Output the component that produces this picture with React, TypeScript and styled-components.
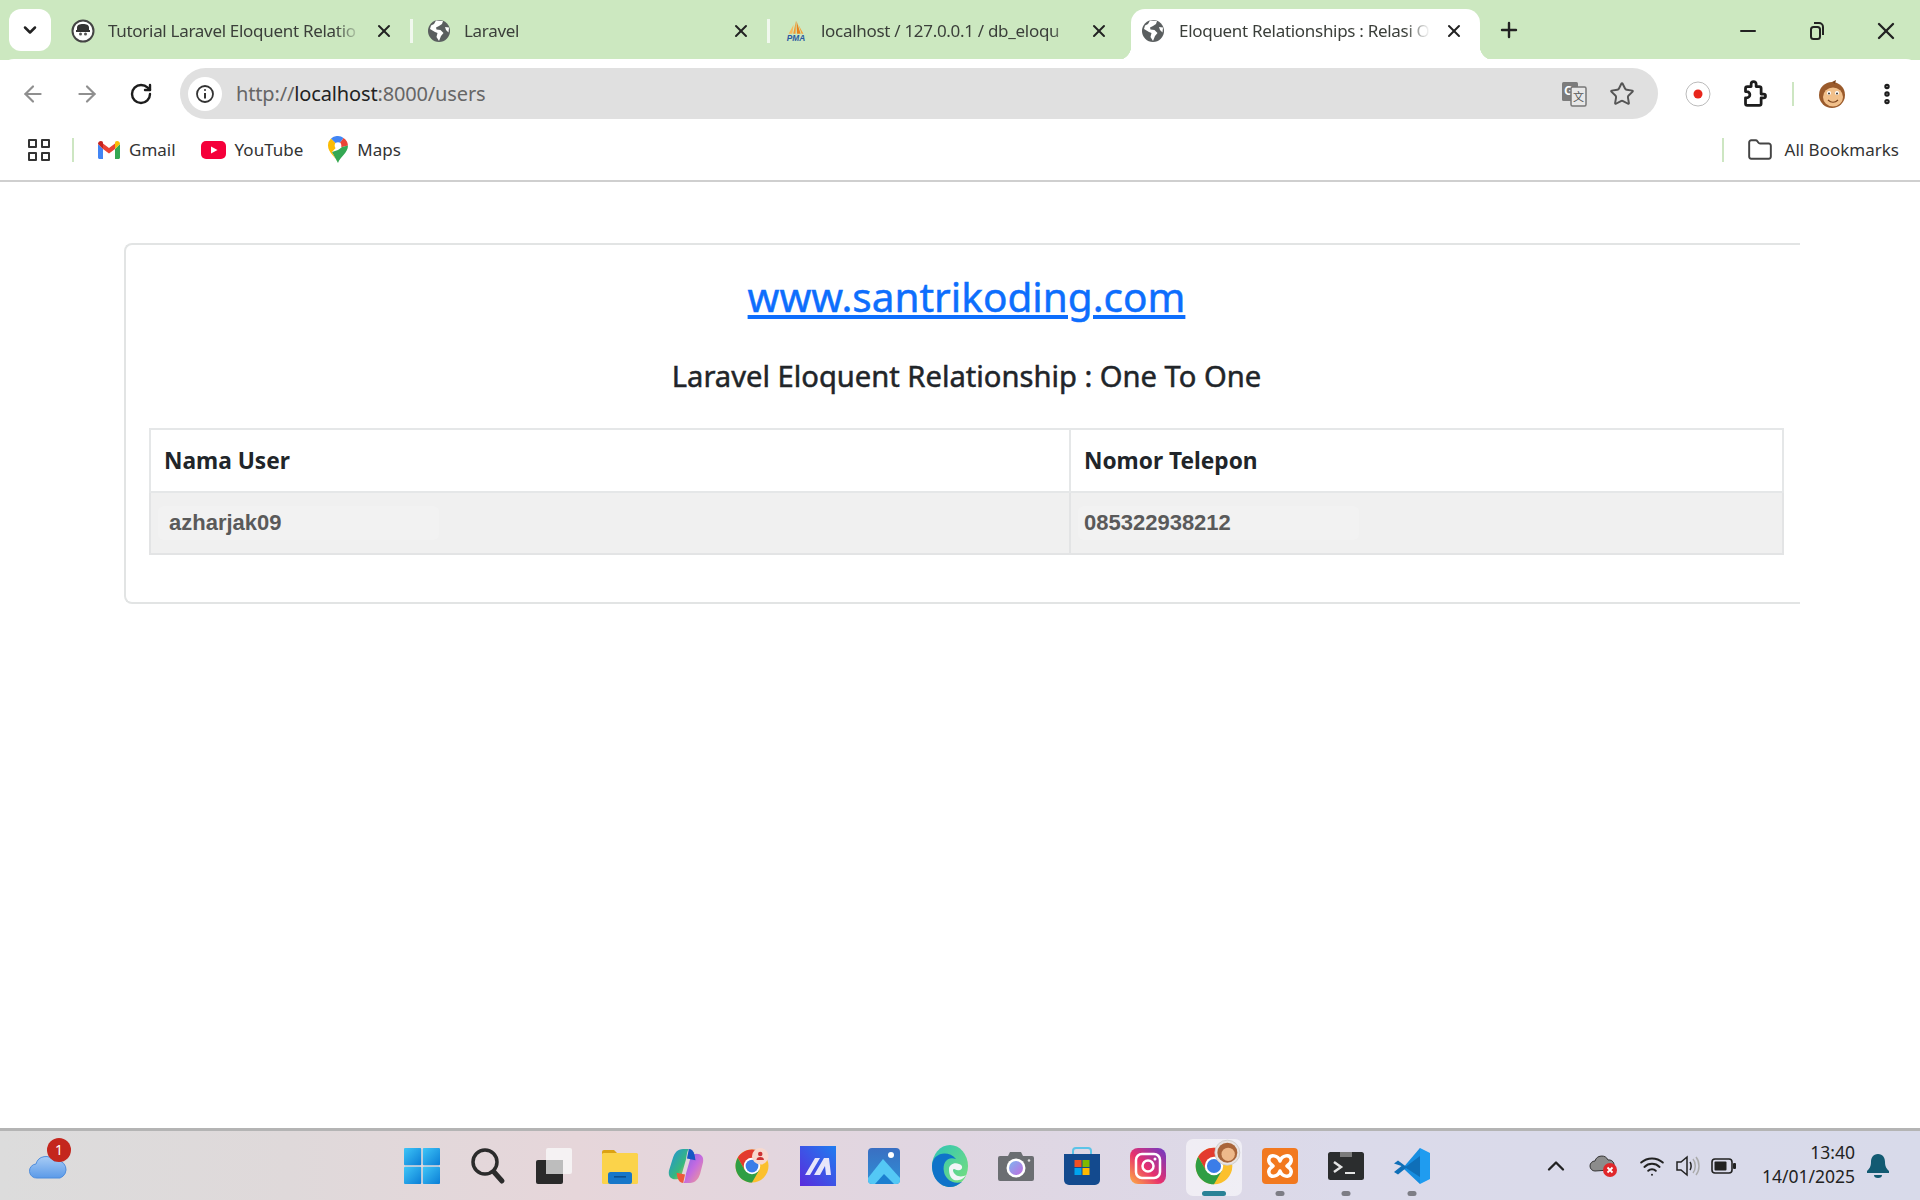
import React from "react";
import type { FC, ReactNode } from "react";
import styled, { createGlobalStyle } from "styled-components";
import {
  ArrowLeft,
  ArrowRight,
  RotateCw,
  Star,
  Plus,
  X,
  Minus,
  ChevronDown,
  ChevronUp,
  Folder,
  Wifi,
  EllipsisVertical,
} from "lucide-react";

const UI_FONT = `"Noto Sans", "Open Sans", sans-serif`;

const GlobalStyle = createGlobalStyle`
  html, body {
    margin: 0;
    width: 1920px;
    height: 1200px;
    overflow: hidden;
    background: #fff;
    font-family: ${UI_FONT};
  }
`;

const Screen = styled.div`
  display: flex;
  flex-direction: column;
  width: 1920px;
  height: 1200px;
`;

/* ---------- tab strip ---------- */

const TabStrip = styled.div`
  display: flex;
  align-items: flex-end;
  height: 60px;
  padding-left: 9px;
  box-sizing: border-box;
  background: #cce8c0;
`;

const TabListButton = styled.div`
  display: flex;
  align-items: center;
  justify-content: center;
  width: 42px;
  height: 42px;
  margin: 0 6px 9px 0;
  border-radius: 12px;
  background: #fff;
  color: #222;
`;

const Tab = styled.div<{ $active?: boolean; $divider?: boolean; $width: number }>`
  position: relative;
  display: flex;
  align-items: center;
  gap: ${(p) => (p.$active ? 14 : 13)}px;
  box-sizing: border-box;
  flex: none;
  width: ${(p) => p.$width}px;
  height: 51px;
  margin-left: ${(p) => (p.$active ? 3 : 0)}px;
  padding: 0 ${(p) => (p.$active ? 16 : 19)}px 8px ${(p) => (p.$active ? 10 : 14)}px;
  border-radius: 14px 14px 0 0;
  background: ${(p) => (p.$active ? "#fff" : "transparent")};

  ${(p) =>
    p.$divider &&
    `
    &::after {
      content: "";
      position: absolute;
      right: 0;
      top: 10px;
      width: 3px;
      height: 24px;
      background: #f1f8ee;
    }
  `}

  ${(p) =>
    p.$active &&
    `
    &::before, &::after {
      content: "";
      position: absolute;
      bottom: 0;
      width: 14px;
      height: 14px;
    }
    &::before {
      left: -14px;
      background: radial-gradient(circle at 0 0, transparent 14px, #fff 14.5px);
    }
    &::after {
      right: -14px;
      background: radial-gradient(circle at 100% 0, transparent 14px, #fff 14.5px);
    }
  `}
`;

const TabIcon = styled.span`
  display: flex;
  flex: none;
  width: 24px;
  height: 24px;
`;

const TabTitle = styled.span`
  flex: 1;
  min-width: 0;
  white-space: nowrap;
  font-size: 17px;
  letter-spacing: -0.3px;
  color: #3b3f3a;
  mask-image: linear-gradient(90deg, #000 90%, transparent 100%);
`;

const TabClose = styled.span`
  display: flex;
  flex: none;
  color: #222;
`;

const NewTab = styled.div`
  display: flex;
  margin: 0 0 18px 17px;
  color: #222;
`;

const WindowControls = styled.div`
  display: flex;
  align-items: center;
  margin-left: auto;
  margin-bottom: 15px;
  padding-right: 20px;
  gap: 44px;
  color: #222;
`;

/* ---------- toolbar ---------- */

const Toolbar = styled.div`
  display: flex;
  align-items: center;
  height: 60px;
  padding: 9px 0 0 17px;
  box-sizing: border-box;
  background: #fff;
  border-radius: 14px 14px 0 0;
  margin-top: -1px;
  position: relative;
`;

const NavButton = styled.span<{ $muted?: boolean }>`
  display: flex;
  flex: none;
  justify-content: center;
  width: 32px;
  margin-right: 22px;
  color: ${(p) => (p.$muted ? "#8f8f8f" : "#1c1c1c")};
`;

const Omnibox = styled.div`
  display: flex;
  align-items: center;
  flex: none;
  box-sizing: border-box;
  width: 1478px;
  height: 51px;
  margin-left: 1px;
  padding: 0 23px 0 8px;
  border-radius: 26px;
  background: #e0e0e0;
`;

const SiteInfo = styled.span`
  display: flex;
  align-items: center;
  justify-content: center;
  width: 34px;
  height: 34px;
  border-radius: 50%;
  background: #fff;
  color: #333;
`;

const Url = styled.div`
  flex: 1;
  margin-left: 14px;
  font-size: 20px;
  letter-spacing: -0.15px;
  color: #666;
  b {
    font-weight: 400;
    color: #222;
  }
`;

const OmniIcons = styled.div`
  display: flex;
  align-items: center;
  gap: 21px;
`;

const ToolbarIcons = styled.div`
  display: flex;
  flex: none;
  align-items: center;
  margin-left: 24px;
`;

const ToolbarSlot = styled.span<{ $width: number }>`
  display: flex;
  justify-content: center;
  width: ${(p) => p.$width}px;
  color: #1c1c1c;
`;

const ThinDivider = styled.span<{ $height: number }>`
  flex: none;
  width: 2px;
  height: ${(p) => p.$height}px;
  background: #cde6c2;
`;

/* ---------- bookmarks ---------- */

const BookmarkBar = styled.div`
  display: flex;
  align-items: center;
  height: 63px;
  padding: 0 21px 0 28px;
  box-sizing: border-box;
  background: #fff;
  border-bottom: 2px solid #cfcfcf;
`;

const AppsGrid = styled.span`
  display: grid;
  grid-template-columns: 9px 9px;
  gap: 4px;
  margin-right: 22px;
  span {
    width: 9px;
    height: 9px;
    box-sizing: border-box;
    border: 2.5px solid #333;
    border-radius: 1px;
  }
`;

const Bookmark = styled.div`
  display: flex;
  align-items: center;
  gap: 9px;
  margin-left: 25px;
  font-size: 17px;
  color: #333;

  ${ThinDivider} + & {
    margin-left: 24px;
  }
`;

const AllBookmarks = styled(Bookmark)`
  gap: 12px;

  ${ThinDivider} + & {
    margin-left: 23px;
  }
`;

const Spacer = styled.div`
  flex: 1;
`;

/* ---------- page ---------- */

const Page = styled.main`
  flex: 1;
  padding: 61px 0 0 124px;
  background: #fff;
`;

const Card = styled.section`
  box-sizing: border-box;
  width: 1676px;
  height: 361px;
  padding: 28px 16px 0 23px;
  border: 2px solid #e2e4e4;
  border-right: 0;
  border-radius: 8px 0 0 8px;
`;

const Heading = styled.h1`
  margin: 0;
  text-align: center;
  font-size: 40.5px;
  line-height: 48px;
  font-weight: 400;
  -webkit-text-stroke: 0.5px currentColor;
`;

const SiteLink = styled.a`
  color: #0d6efd;
  text-decoration: underline;
`;

const SubHeading = styled.h2`
  margin: 35px 0 0;
  text-align: center;
  font-size: 29.15px;
  line-height: 40px;
  font-weight: 400;
  -webkit-text-stroke: 0.5px currentColor;
  color: #212529;
`;

const Table = styled.table`
  width: 100%;
  margin-top: 32px;
  border-collapse: collapse;
  table-layout: fixed;
`;

const HeadCell = styled.th<{ $width?: number }>`
  box-sizing: border-box;
  width: ${(p) => (p.$width ? `${p.$width}px` : "auto")};
  height: 63px;
  padding: 0 13px;
  border: 2px solid #e5e7e8;
  text-align: left;
  font-size: 22.7px;
  font-weight: 700;
  color: #212529;
`;

const BodyCell = styled.td`
  height: 60px;
  padding: 0 7px;
  border: 2px solid #e3e4e5;
  background: #f0f0f0;
`;

const CellText = styled.span<{ $width: number; $indent: number }>`
  display: block;
  box-sizing: border-box;
  width: ${(p) => p.$width}px;
  padding: 2px 0 2px ${(p) => p.$indent}px;
  border-radius: 6px;
  background: #f2f2f2;
  font-family: "Liberation Sans", Arial, sans-serif;
  font-size: 22px;
  font-weight: 700;
  line-height: 30px;
  color: #5a5a5a;
`;

/* ---------- taskbar ---------- */

const Taskbar = styled.footer`
  display: flex;
  align-items: center;
  height: 72px;
  box-sizing: border-box;
  flex: none;
  border-top: 3px solid #b4b4b4;
  background: linear-gradient(90deg, #dcdcdc 0%, #dfd9da 15%, #e6d6da 30%, #e0d6e2 50%, #dbdaea 70%, #d8daea 100%);
`;

const Weather = styled.div`
  position: relative;
  flex: none;
  display: flex;
  align-items: center;
  box-sizing: border-box;
  width: 389px;
  padding-left: 29px;
`;

const WeatherBadge = styled.span`
  position: absolute;
  top: -15px;
  left: 47px;
  display: flex;
  align-items: center;
  justify-content: center;
  width: 24px;
  height: 24px;
  border-radius: 50%;
  background: #c4261d;
  color: #fff;
  font-size: 14px;
`;

const TaskItems = styled.div`
  display: flex;
`;

const TaskItem = styled.div<{ $active?: boolean; $running?: boolean }>`
  position: relative;
  display: flex;
  align-items: center;
  justify-content: center;
  width: 66px;
  height: 66px;

  ${(p) =>
    p.$active &&
    `
    &::before {
      content: "";
      position: absolute;
      left: 5px;
      top: 6px;
      width: 56px;
      height: 57px;
      border-radius: 7px;
      background: rgba(255, 255, 255, 0.55);
    }
  `}

  ${(p) =>
    (p.$active || p.$running) &&
    `
    &::after {
      content: "";
      position: absolute;
      bottom: 3px;
      left: 50%;
      transform: translateX(-50%);
      width: ${p.$active ? 24 : 9}px;
      height: 5px;
      border-radius: 3px;
      background: ${p.$active ? "#2a8296" : "#7d7d85"};
    }
  `}

  svg {
    position: relative;
    z-index: 1;
    overflow: visible;
  }
`;

const Tray = styled.div`
  flex: 1;
  display: flex;
  align-items: center;
  justify-content: flex-end;
  padding-right: 19px;
`;

const TrayIcons = styled.div<{ $gap: number }>`
  display: flex;
  align-items: center;
  gap: ${(p) => p.$gap}px;
  margin-right: ${(p) => (p.$gap ? 12 : 0)}px;
`;

const TrayIcon = styled.span`
  display: flex;
  justify-content: center;
  width: 36px;
  color: #222;
`;

const Clock = styled.div`
  margin: -3px 0 0 20px;
  text-align: right;
  font-size: 17.5px;
  line-height: 24px;
  color: #222;
`;

const Bell = styled.span`
  display: flex;
  justify-content: center;
  width: 46px;
`;

/* ---------- drawings ---------- */

const SantriFavicon = () => (
  <svg width="24" height="24" viewBox="0 0 24 24">
    <circle cx="12" cy="12" r="10.5" fill="#fff" stroke="#444" strokeWidth="2" />
    <path d="M6 11V8.5C6 6 8.500 5 12 5s6 1 6 3.500V11z" fill="#333" />
    <rect x="5" y="11" width="14" height="2" fill="#333" />
    <circle cx="9.500" cy="15" r="1.500" fill="#555" />
    <circle cx="14.500" cy="15" r="1.500" fill="#555" />
  </svg>
);

const GlobeFavicon = () => (
  <svg width="24" height="24" viewBox="0 0 24 24">
    <circle cx="12" cy="12" r="11" fill="#5a5e5f" />
    <path d="M9 1.500 7 5l-3 1.500L3 10l5 3 2.500 1-1 4 2.500 4 2-5 2.500-3-3-3-4-.5-.5-2 3-1.500L15 5l1-3z" fill="#fff" />
    <path d="M18 8l4 .5-.5 5L19 11z" fill="#fff" />
  </svg>
);

const PmaFavicon = () => (
  <svg width="26" height="24" viewBox="0 0 26 24">
    <path d="M10 15 13 1l-.5 14z" fill="#f29a2e" />
    <path d="M14 15 13.500 1 18 15z" fill="#e8821c" />
    <path d="M5 15 10.500 5 9 15z" fill="#f7b95e" />
    <path d="M19 15 15.500 5 21 15z" fill="#f2a33c" />
    <text x="13" y="23" textAnchor="middle" fontSize="9" fontStyle="italic" fontWeight="700" fill="#2c5aa0" fontFamily="Liberation Sans, sans-serif">PMA</text>
  </svg>
);

const InfoIcon = () => (
  <svg width="20" height="20" viewBox="0 0 20 20" fill="none" stroke="#333" strokeWidth="1.800">
    <circle cx="10" cy="10" r="8" />
    <path d="M10 9v5.500" strokeWidth="2" />
    <circle cx="10" cy="6" r="1" fill="#333" stroke="none" />
  </svg>
);

const TranslateIcon = () => (
  <svg width="28" height="28" viewBox="0 0 28 28">
    <rect x="2" y="2" width="16" height="19" rx="1.500" fill="#7c7c7c" />
    <text x="9" y="15" textAnchor="middle" fontSize="12" fontWeight="700" fill="#fff" fontFamily="Liberation Sans, sans-serif">G</text>
    <rect x="11" y="7" width="15" height="19" rx="1.500" fill="#e8e8e8" stroke="#777" strokeWidth="1.500" />
    <text x="18.500" y="21" textAnchor="middle" fontSize="11" fill="#555" fontFamily="Noto Sans CJK SC, sans-serif">文</text>
  </svg>
);

const RecordIcon = () => (
  <svg width="26" height="26" viewBox="0 0 26 26">
    <circle cx="13" cy="13" r="12" fill="#fff" stroke="#bbb" strokeWidth="1" />
    <circle cx="13" cy="13" r="4.500" fill="#e8261c" />
  </svg>
);

const PuzzleIcon = () => (
  <svg width="30" height="30" viewBox="0 0 24 24" fill="none" stroke="#1c1c1c" strokeWidth="2.200" strokeLinejoin="round">
    <path d="M20.500 12H18.500V7.500c0-.8-.7-1.500-1.500-1.500h-2.500V4a2 2 0 0 0-4 0v2H7.500C6.700 6 6 6.700 6 7.500V10h1a2.500 2.500 0 0 1 0 5H6v4.500c0 .8.700 1.500 1.500 1.500H17c.8 0 1.500-.7 1.500-1.500V15h2a1.500 1.500 0 0 0 0-3z" />
  </svg>
);

const MonkeyAvatar = ({ size = 30 }: { size?: number }) => (
  <svg width={size} height={size} viewBox="0 0 30 30">
    <circle cx="15" cy="16" r="13" fill="#9a5a2b" />
    <path d="M15 3l4-2-1 4z" fill="#7b431c" />
    <ellipse cx="16" cy="18" rx="10" ry="9.500" fill="#f1c08b" />
    <circle cx="12" cy="14" r="2" fill="#fff" />
    <circle cx="20" cy="14" r="2" fill="#fff" />
    <circle cx="12" cy="14.500" r="1" fill="#333" />
    <circle cx="20" cy="14.500" r="1" fill="#333" />
    <path d="M11 21c3 3 7 3 10 0" fill="none" stroke="#7b431c" strokeWidth="1.200" />
  </svg>
);

const GmailIcon = () => (
  <svg width="22" height="18" viewBox="0 0 22 18">
    <path d="M0 3v13.500C0 17.300.7 18 1.500 18H5V8z" fill="#4285f4" />
    <path d="M22 3v13.500c0 .8-.7 1.500-1.500 1.500H17V8z" fill="#34a853" />
    <path d="M5 8V2.500L11 7l6-4.500V8l-6 4.500z" fill="#ea4335" />
    <path d="M0 3c0-2.500 2.800-3.800 4.800-2.300L5 2.500V8z" fill="#c5221f" />
    <path d="M22 3c0-2.500-2.800-3.800-4.800-2.300L17 2.500V8z" fill="#fbbc04" />
  </svg>
);

const YoutubeIcon = () => (
  <svg width="25" height="18" viewBox="0 0 25 18">
    <rect width="25" height="18" rx="5" fill="#f5003a" />
    <path d="M10 5.500 16.500 9 10 12.500z" fill="#fff" />
  </svg>
);

const MapsIcon = () => (
  <svg width="20" height="27" viewBox="0 0 20 27">
    <path d="M10 27C8 21 0 17 0 9.500a9.500 9.500 0 0 1 3-7L10 9.500 4 16z" fill="#fbbc04" />
    <path d="M3 2.500A9.500 9.500 0 0 1 10 0c2 0 4 .7 5.500 2L10 9.500z" fill="#4285f4" />
    <path d="M15.500 2A9.500 9.500 0 0 1 20 9.500L14 11l-4-1.500z" fill="#ea4335" />
    <path d="M20 9.500C20 17 12 21 10 27L4 16l6-2 4-3z" fill="#34a853" />
    <circle cx="10" cy="9.500" r="3.300" fill="#fff" />
  </svg>
);

const WeatherIcon = () => (
  <svg width="38" height="26" viewBox="0 0 38 26">
    <defs>
      <linearGradient id="cloudFill" x1="0" y1="0" x2="0" y2="1">
        <stop offset="0" stopColor="#a8ccf5" />
        <stop offset="1" stopColor="#5b9ae8" />
      </linearGradient>
    </defs>
    <path d="M27 2l6 5-3 3z" fill="#f0962e" />
    <path d="M8 25a7 7 0 0 1-1-14 10 10 0 0 1 18-3 8 8 0 0 1 6 17z" fill="url(#cloudFill)" stroke="#4f8ddc" strokeWidth="1" />
  </svg>
);

const WindowsLogo = () => (
  <svg width="36" height="36" viewBox="0 0 36 36">
    <defs>
      <linearGradient id="winA" x1="0" y1="0" x2="1" y2="1">
        <stop offset="0" stopColor="#3ec5f7" />
        <stop offset="1" stopColor="#0b7ed6" />
      </linearGradient>
    </defs>
    <rect x="0" y="0" width="17.200" height="17.200" rx="1" fill="url(#winA)" />
    <rect x="18.800" y="0" width="17.200" height="17.200" rx="1" fill="url(#winA)" />
    <rect x="0" y="18.800" width="17.200" height="17.200" rx="1" fill="url(#winA)" />
    <rect x="18.800" y="18.800" width="17.200" height="17.200" rx="1" fill="url(#winA)" />
  </svg>
);

const SearchLogo = () => (
  <svg width="36" height="38" viewBox="0 0 36 38" fill="none" stroke="#2b2b2b" strokeLinecap="round">
    <circle cx="15" cy="15" r="12" strokeWidth="3.500" />
    <path d="M24 25l8 9" strokeWidth="5" />
  </svg>
);

const TaskViewLogo = () => (
  <svg width="36" height="36" viewBox="0 0 36 36">
    <rect x="0" y="12" width="27" height="24" rx="2" fill="#2a2a2a" />
    <rect x="10" y="0" width="26" height="26" rx="2" fill="#f6f4f5" opacity="0.92" />
    <rect x="10" y="12" width="17" height="14" fill="#bdbdbd" />
  </svg>
);

const FolderLogo = () => (
  <svg width="36" height="36" viewBox="0 0 36 36">
    <path d="M0 4a2 2 0 0 1 2-2h10l4 4H0z" fill="#dba213" />
    <rect x="0" y="5" width="36" height="31" rx="1.500" fill="#fbd34a" />
    <rect x="6" y="24" width="24" height="12" rx="2.500" fill="#1777c9" />
    <rect x="12" y="28" width="12" height="1.600" fill="#0b4f8f" />
  </svg>
);

const CopilotLogo = () => (
  <svg width="36" height="36" viewBox="0 0 36 38">
    <defs>
      <linearGradient id="copA" x1="0" y1="0" x2="1" y2="1">
        <stop offset="0" stopColor="#1f8fe0" />
        <stop offset="0.6" stopColor="#37b77e" />
        <stop offset="1" stopColor="#f2d13c" />
      </linearGradient>
      <linearGradient id="copB" x1="0" y1="0" x2="1" y2="1">
        <stop offset="0" stopColor="#7a63e8" />
        <stop offset="0.5" stopColor="#c46be0" />
        <stop offset="1" stopColor="#f5a08a" />
      </linearGradient>
    </defs>
    <path d="M21 1h-6C9 1 6 5 4 11L0 24c-1 6 2 9 7 9 4 0 6-3 7-7l4-14c1-5 1-9 3-11z" fill="url(#copA)" />
    <path d="M15 37h7c6 0 9-4 11-10l3-12c1-6-2-9-7-9-4 0-6 3-7 7l-4 14c-1 5-1 9-3 10z" fill="url(#copB)" />
    <path d="M21 1c3 0 5 2 6 6l1 6-9-2z" fill="#1556c4" />
    <path d="M15 37c-3 0-5-2-6-6l-1-5 9 2z" fill="#ee5a3a" />
  </svg>
);

const ChromeMark = () => (
  <>
    <circle cx="24" cy="24" r="22" fill="#fbc02d" />
    <path d="M43.050 13H24L14.500 29.500 4.950 13a22 22 0 0 1 38.100 0z" fill="#e33b2e" />
    <path d="M4.950 13A22 22 0 0 0 24 46l9.500-16.500h-19z" fill="#2f9e44" />
    <circle cx="24" cy="24" r="11" fill="#fff" />
    <circle cx="24" cy="24" r="8.500" fill="#3b7de8" />
  </>
);

const ChromeActive = () => (
  <svg width="40" height="40" viewBox="0 0 48 48">
    <ChromeMark />
    <circle cx="40" cy="8" r="15" fill="#e9e4e2" stroke="#c9c9c9" />
    <circle cx="40" cy="8" r="12" fill="#a9663a" />
    <ellipse cx="41" cy="10" rx="8" ry="8" fill="#eeb98a" />
  </svg>
);

const ChromeBadged = () => (
  <svg width="36" height="38" viewBox="0 0 48 48">
    <ChromeMark />
    <circle cx="35" cy="11" r="11" fill="#f7d9cf" />
    <circle cx="35" cy="8" r="3" fill="#c33" />
    <path d="M30 16a5 4 0 0 1 10 0z" fill="#c33" />
  </svg>
);

const MLogo = () => (
  <svg width="36" height="40" viewBox="0 0 36 40">
    <defs>
      <linearGradient id="mBg" x1="0" y1="1" x2="1" y2="0">
        <stop offset="0" stopColor="#5a2bdc" />
        <stop offset="1" stopColor="#1f7df0" />
      </linearGradient>
    </defs>
    <rect width="36" height="40" fill="url(#mBg)" />
    <path d="M5 29 15 12h5L10 29zM14 29 24 12h5l2 17h-5l-1-9-5 9z" fill="#e8e6fa" />
  </svg>
);

const PhotosLogo = () => (
  <svg width="32" height="36" viewBox="0 0 32 36">
    <defs>
      <linearGradient id="phBg" x1="0" y1="0" x2="0" y2="1">
        <stop offset="0" stopColor="#3a6fc2" />
        <stop offset="1" stopColor="#2e8fd6" />
      </linearGradient>
    </defs>
    <rect width="32" height="36" rx="4" fill="url(#phBg)" />
    <circle cx="23" cy="7" r="3" fill="#fff" />
    <path d="M0 30 15 11l17 19v2a4 4 0 0 1-4 4H4a4 4 0 0 1-4-4z" fill="#54c8f5" />
    <path d="M7 36l9-10 10 10z" fill="#1c7fd0" />
  </svg>
);

const EdgeLogo = () => (
  <svg width="36" height="42" viewBox="0 0 36 42">
    <defs>
      <linearGradient id="edA" x1="0" y1="0" x2="1" y2="1">
        <stop offset="0" stopColor="#2ec4b6" />
        <stop offset="1" stopColor="#7be07a" />
      </linearGradient>
    </defs>
    <ellipse cx="18" cy="21" rx="18" ry="21" fill="url(#edA)" />
    <path d="M0 21C0 8 16 4 24 14c-8-3-14 3-12 13 1 6 8 13 18 10-4 3-8 5-12 5C8 42 0 33 0 21z" fill="#0f73c9" />
    <path d="M17 24c0-4 5-7 10-5 4 1 4 5 1 6-4 1-4-1-6-1-2 0-1 5 4 7 3 1 7 0 8-1-3 5-9 6-12 5-4-2-5-7-5-11z" fill="#f2f5f8" />
  </svg>
);

const CameraLogo = () => (
  <svg width="36" height="30" viewBox="0 0 36 30">
    <defs>
      <linearGradient id="camL" x1="0" y1="0" x2="1" y2="1">
        <stop offset="0" stopColor="#7db5f0" />
        <stop offset="1" stopColor="#c16ce0" />
      </linearGradient>
    </defs>
    <path d="M2 5h8l2-4h11l2 4h9a2 2 0 0 1 2 2v21a2 2 0 0 1-2 2H2a2 2 0 0 1-2-2V7a2 2 0 0 1 2-2z" fill="#6b6e72" />
    <circle cx="18" cy="17" r="9.500" fill="#fff" />
    <circle cx="18" cy="17" r="7" fill="url(#camL)" />
    <circle cx="31" cy="9.500" r="1.300" fill="#ddd" />
  </svg>
);

const StoreLogo = () => (
  <svg width="36" height="38" viewBox="0 0 36 38">
    <path d="M9 8V4a3 3 0 0 1 3-3h12a3 3 0 0 1 3 3v4" fill="none" stroke="#5cc4e8" strokeWidth="2" />
    <path d="M0 7h36v26a5 5 0 0 1-5 5H5a5 5 0 0 1-5-5z" fill="#134a8e" />
    <rect x="10.500" y="13" width="7" height="7" fill="#f25022" />
    <rect x="18.500" y="13" width="7" height="7" fill="#7fba00" />
    <rect x="10.500" y="21" width="7" height="7" fill="#00a4ef" />
    <rect x="18.500" y="21" width="7" height="7" fill="#ffb900" />
  </svg>
);

const InstagramLogo = () => (
  <svg width="36" height="36" viewBox="0 0 36 36">
    <defs>
      <linearGradient id="igBg" x1="0" y1="1" x2="1" y2="0">
        <stop offset="0" stopColor="#fdb043" />
        <stop offset="0.45" stopColor="#e8306d" />
        <stop offset="1" stopColor="#6a3bc8" />
      </linearGradient>
    </defs>
    <rect width="36" height="36" rx="8" fill="url(#igBg)" />
    <rect x="6" y="6" width="24" height="24" rx="6" fill="none" stroke="#fff" strokeWidth="2.500" />
    <circle cx="18" cy="18" r="5.500" fill="none" stroke="#fff" strokeWidth="2.500" />
    <circle cx="25" cy="11" r="1.500" fill="#fff" />
  </svg>
);

const XamppLogo = () => (
  <svg width="36" height="36" viewBox="0 0 36 36">
    <rect width="36" height="36" rx="4" fill="#f2791f" />
    <path d="M18 13c-2-6-10-7-11-2-1 3 1 5 4 7-3 2-5 4-4 7 1 5 9 4 11-2 2 6 10 7 11 2 1-3-1-5-4-7 3-2 5-4 4-7-1-5-9-4-11 2z" fill="none" stroke="#fff" strokeWidth="3.500" strokeLinejoin="round" />
  </svg>
);

const TerminalLogo = () => (
  <svg width="36" height="28" viewBox="0 0 36 28">
    <rect width="36" height="28" rx="2.500" fill="#2b2d2e" />
    <rect x="12" width="12" height="5" fill="#7b7b7b" />
    <path d="M6 10l7 5-7 5" fill="none" stroke="#e4e4e4" strokeWidth="2.500" />
    <rect x="17" y="20" width="10" height="2" fill="#e4e4e4" />
  </svg>
);

const VscodeLogo = () => (
  <svg width="36" height="36" viewBox="0 0 36 36">
    <path d="M26 0 36 5v26l-10 5-17-16z" fill="#1f9cf0" />
    <path d="M26 0v36L9 20z" fill="#0a78c7" opacity="0.4" />
    <path d="M26 8 12 18.500 4 12.500l-4 3 7.500 2.500L0 24l4 2.500 8-6.500L26 29z" fill="#0f6fb8" />
  </svg>
);

const CloudError = () => (
  <svg width="30" height="26" viewBox="0 0 30 26">
    <path d="M6 18a5 5 0 0 1 0-10 7 7 0 0 1 13-1 5 5 0 0 1 2 10z" fill="#8c8c8c" stroke="#333" strokeWidth="1" />
    <circle cx="21" cy="17" r="7" fill="#e0272b" />
    <path d="M18.500 14.500l5 5m0-5-5 5" stroke="#fff" strokeWidth="1.800" />
  </svg>
);

const SpeakerIcon = () => (
  <svg width="26" height="26" viewBox="0 0 26 26" fill="none" strokeWidth="1.500">
    <path d="M2 9h4l6-5v18l-6-5H2z" stroke="#222" />
    <path d="M15 9c1.500 2 1.500 6 0 8" stroke="#222" />
    <path d="M18 6c3 3.500 3 10.500 0 14M21 4c4 5 4 13 0 18" stroke="#aaa" />
  </svg>
);

const BatteryIcon = () => (
  <svg width="26" height="16" viewBox="0 0 26 16">
    <rect x="1" y="1" width="20" height="14" rx="3" fill="none" stroke="#222" strokeWidth="1.600" />
    <rect x="3.500" y="3.500" width="12" height="9" rx="1" fill="#222" />
    <rect x="22" y="5" width="3" height="6" rx="1" fill="#222" />
  </svg>
);

const BellIcon = () => (
  <svg width="24" height="26" viewBox="0 0 24 26">
    <path d="M12 1c-5 0-7 4-7 8 0 5-2 7-4 9v2h22v-2c-2-2-4-4-4-9 0-4-2-8-7-8z" fill="#125a72" />
    <path d="M8 22a4 3 0 0 0 8 0z" fill="#125a72" />
  </svg>
);

/* ---------- data ---------- */

interface TabData {
  title: string;
  width: number;
  icon: ReactNode;
  divider?: boolean;
}

const TABS: TabData[] = [
  { title: "Tutorial Laravel Eloquent Relatio", width: 356, icon: <SantriFavicon />, divider: true },
  { title: "Laravel", width: 357, icon: <GlobeFavicon />, divider: true },
  { title: "localhost / 127.0.0.1 / db_eloqu", width: 358, icon: <PmaFavicon /> },
];

const TASK_ITEMS: { key: string; icon: ReactNode; active?: boolean; running?: boolean }[] = [
  { key: "start", icon: <WindowsLogo /> },
  { key: "search", icon: <SearchLogo /> },
  { key: "taskview", icon: <TaskViewLogo /> },
  { key: "files", icon: <FolderLogo /> },
  { key: "copilot", icon: <CopilotLogo /> },
  { key: "chrome-badge", icon: <ChromeBadged /> },
  { key: "m", icon: <MLogo /> },
  { key: "photos", icon: <PhotosLogo /> },
  { key: "edge", icon: <EdgeLogo /> },
  { key: "camera", icon: <CameraLogo /> },
  { key: "store", icon: <StoreLogo /> },
  { key: "instagram", icon: <InstagramLogo /> },
  { key: "chrome", icon: <ChromeActive />, active: true },
  { key: "xampp", icon: <XamppLogo />, running: true },
  { key: "terminal", icon: <TerminalLogo />, running: true },
  { key: "vscode", icon: <VscodeLogo />, running: true },
];

const App: FC = () => {
  return (
    <Screen>
      <GlobalStyle />
      <TabStrip>
        <TabListButton>
          <ChevronDown size={20} strokeWidth={3} />
        </TabListButton>
        {TABS.map((tab) => (
          <Tab key={tab.title} $width={tab.width} $divider={tab.divider}>
            <TabIcon>{tab.icon}</TabIcon>
            <TabTitle>{tab.title}</TabTitle>
            <TabClose>
              <X size={20} strokeWidth={2.4} />
            </TabClose>
          </Tab>
        ))}
        <Tab $width={349} $active>
          <TabIcon>
            <GlobeFavicon />
          </TabIcon>
          <TabTitle>Eloquent Relationships : Relasi O</TabTitle>
          <TabClose>
            <X size={20} strokeWidth={2.4} />
          </TabClose>
        </Tab>
        <NewTab>
          <Plus size={24} strokeWidth={2.4} />
        </NewTab>
        <WindowControls>
          <Minus size={24} strokeWidth={2} />
          <svg width="24" height="24" viewBox="0 0 24 24" fill="none" stroke="#222" strokeWidth="2">
            <rect x="7" y="8" width="9" height="12" rx="2.500" />
            <path d="M10 4h5a4 4 0 0 1 4 4v8" />
          </svg>
          <X size={28} strokeWidth={2} />
        </WindowControls>
      </TabStrip>

      <Toolbar>
        <NavButton $muted>
          <ArrowLeft size={26} strokeWidth={2} />
        </NavButton>
        <NavButton $muted>
          <ArrowRight size={26} strokeWidth={2} />
        </NavButton>
        <NavButton>
          <RotateCw size={24} strokeWidth={2.4} />
        </NavButton>
        <Omnibox>
          <SiteInfo>
            <InfoIcon />
          </SiteInfo>
          <Url>
            http://<b>localhost</b>:8000/users
          </Url>
          <OmniIcons>
            <TranslateIcon />
            <Star size={26} strokeWidth={1.8} color="#555" />
          </OmniIcons>
        </Omnibox>
        <ToolbarIcons>
          <ToolbarSlot $width={32}>
            <RecordIcon />
          </ToolbarSlot>
          <ToolbarSlot $width={78}>
            <PuzzleIcon />
          </ToolbarSlot>
          <ThinDivider $height={24} />
          <ToolbarSlot $width={76}>
            <MonkeyAvatar />
          </ToolbarSlot>
          <ToolbarSlot $width={34}>
            <EllipsisVertical size={26} strokeWidth={3} />
          </ToolbarSlot>
        </ToolbarIcons>
      </Toolbar>

      <BookmarkBar>
        <AppsGrid>
          <span />
          <span />
          <span />
          <span />
        </AppsGrid>
        <ThinDivider $height={24} />
        <Bookmark>
          <GmailIcon />
          Gmail
        </Bookmark>
        <Bookmark>
          <YoutubeIcon />
          YouTube
        </Bookmark>
        <Bookmark>
          <MapsIcon />
          Maps
        </Bookmark>
        <Spacer />
        <ThinDivider $height={24} />
        <AllBookmarks>
          <Folder size={26} strokeWidth={1.8} color="#444" />
          All Bookmarks
        </AllBookmarks>
      </BookmarkBar>

      <Page>
        <Card>
          <Heading>
            <SiteLink href="#">www.santrikoding.com</SiteLink>
          </Heading>
          <SubHeading>Laravel Eloquent Relationship : One To One</SubHeading>
          <Table>
            <thead>
              <tr>
                <HeadCell $width={920}>Nama User</HeadCell>
                <HeadCell>Nomor Telepon</HeadCell>
              </tr>
            </thead>
            <tbody>
              <tr>
                <BodyCell>
                  <CellText $width={281} $indent={11}>azharjak09</CellText>
                </BodyCell>
                <BodyCell>
                  <CellText $width={281} $indent={6}>085322938212</CellText>
                </BodyCell>
              </tr>
            </tbody>
          </Table>
        </Card>
      </Page>

      <Taskbar>
        <Weather>
          <WeatherIcon />
          <WeatherBadge>1</WeatherBadge>
        </Weather>
        <TaskItems>
          {TASK_ITEMS.map((item) => (
            <TaskItem key={item.key} $active={item.active} $running={item.running}>
              {item.icon}
            </TaskItem>
          ))}
        </TaskItems>
        <Tray>
          <TrayIcons $gap={12}>
            <TrayIcon>
              <ChevronUp size={28} strokeWidth={2} />
            </TrayIcon>
            <TrayIcon>
              <CloudError />
            </TrayIcon>
          </TrayIcons>
          <TrayIcons $gap={0}>
            <TrayIcon>
              <Wifi size={26} strokeWidth={1.8} />
            </TrayIcon>
            <TrayIcon>
              <SpeakerIcon />
            </TrayIcon>
            <TrayIcon>
              <BatteryIcon />
            </TrayIcon>
          </TrayIcons>
          <Clock>
            13:40
            <br />
            14/01/2025
          </Clock>
          <Bell>
            <BellIcon />
          </Bell>
        </Tray>
      </Taskbar>
    </Screen>
  );
};

export default App;
